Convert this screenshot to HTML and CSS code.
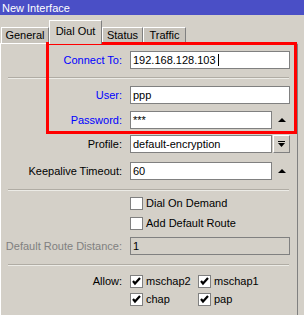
FILE: index.html
```html
<!DOCTYPE html>
<html>
<head>
<meta charset="utf-8">
<link rel="stylesheet" href="styles.css">
</head>
<body>
<div class="title">New Interface</div>
<div class="tabs">
  <div class="tab t-general">General</div>
  <div class="tab active t-dial">Dial Out</div>
  <div class="tab t-status">Status</div>
  <div class="tab t-traffic">Traffic</div>
</div>
<div class="panel">
  <div class="row m7">
    <div class="lbl blue">Connect To:</div>
    <div class="input">192.168.128.103<span class="caret"></span></div>
  </div>
  <div class="sep m8"></div>
  <div class="row m7">
    <div class="lbl blue">User:</div>
    <div class="input">ppp</div>
  </div>
  <div class="row m7">
    <div class="lbl blue">Password:</div>
    <div class="input short">***</div>
    <div class="spin"><span class="up"></span></div>
  </div>
  <div class="row m6">
    <div class="lbl">Profile:</div>
    <div class="input short">default-encryption</div>
    <div class="dropbtn">
      <svg width="9" height="7" viewBox="0 0 9 7"><rect x="1" y="0" width="7" height="1" fill="#000"/><path d="M1 2 H8 L4.5 6 Z" fill="#000"/></svg>
    </div>
  </div>
  <div class="row m9">
    <div class="lbl">Keepalive Timeout:</div>
    <div class="input short">60</div>
    <div class="spin"><span class="up"></span></div>
  </div>
  <div class="sep m9"></div>
  <div class="crow m6">
    <span class="cb"></span><span class="ctext">Dial On Demand</span>
  </div>
  <div class="crow m7">
    <span class="cb"></span><span class="ctext">Add Default Route</span>
  </div>
  <div class="row m7">
    <div class="lbl gray">Default Route Distance:</div>
    <div class="input disabled">1</div>
  </div>
  <div class="sep m9"></div>
  <div class="allow m9">
    <div class="lbl albl">Allow:</div>
    <div class="checks">
      <div class="citem"><span class="cb on"><svg width="11" height="11" viewBox="0 0 11 11"><path d="M2 5 L4 7.5 L9 2" fill="none" stroke="#000" stroke-width="2.2"/></svg></span><span class="ctext">mschap2</span></div>
      <div class="citem"><span class="cb on"><svg width="11" height="11" viewBox="0 0 11 11"><path d="M2 5 L4 7.5 L9 2" fill="none" stroke="#000" stroke-width="2.2"/></svg></span><span class="ctext">mschap1</span></div>
      <div class="citem"><span class="cb on"><svg width="11" height="11" viewBox="0 0 11 11"><path d="M2 5 L4 7.5 L9 2" fill="none" stroke="#000" stroke-width="2.2"/></svg></span><span class="ctext">chap</span></div>
      <div class="citem"><span class="cb on"><svg width="11" height="11" viewBox="0 0 11 11"><path d="M2 5 L4 7.5 L9 2" fill="none" stroke="#000" stroke-width="2.2"/></svg></span><span class="ctext">pap</span></div>
    </div>
  </div>
</div>
<div class="mark"></div>
</body>
</html>
```
FILE: styles.css
```css
* { box-sizing: border-box; }
html, body { margin: 0; padding: 0; }
body {
  width: 304px;
  height: 315px;
  overflow: hidden;
  position: relative;
  background: #d4d0c8;
  font-family: "Liberation Sans", Arial, sans-serif;
  font-size: 11px;
  color: #000;
}
.title {
  height: 15px;
  background: #4a4fc6;
  color: #fff;
  padding: 2px 0 0 2px;
  line-height: 13px;
}
.tabs {
  display: flex;
  align-items: flex-end;
  height: 28px;
  padding-left: 1px;
}
.tab {
  height: 16px;
  line-height: 14px;
  text-align: center;
  background: #c8c4bc;
  border-top: 1px solid #fff;
  border-left: 1px solid #fff;
  border-right: 1px solid #808080;
}
.tab.active {
  position: relative;
  z-index: 2;
  height: 24px;
  margin-bottom: -1px;
  line-height: 20px;
  background: #d4d0c8;
}
.t-general { width: 48px; }
.t-dial { width: 53px; }
.t-status { width: 41px; }
.t-traffic { width: 43px; }
.panel {
  width: 298px;
  height: 272px;
  border-top: 1px solid #fff;
  border-left: 1px solid #fff;
  border-right: 1px solid #808080;
}
.m6 { margin-top: 6px; }
.m7 { margin-top: 7px; }
.m8 { margin-top: 8px; }
.m9 { margin-top: 9px; }
.row {
  display: flex;
  align-items: center;
  height: 18px;
}
.lbl {
  width: 121px;
  margin-right: 8px;
  text-align: right;
  white-space: nowrap;
}
.blue { color: #0000ff; }
.gray { color: #808080; }
.input {
  position: relative;
  width: 160px;
  height: 18px;
  border: 1px solid #808080;
  background: #fff;
  padding-left: 2px;
  line-height: 16px;
  white-space: nowrap;
}
.input.short { width: 142px; }
.input.disabled { background: #d4d0c8; }
.caret {
  display: inline-block;
  width: 1px;
  height: 12px;
  margin-left: 2px;
  vertical-align: -2px;
  background: #000;
}
.spin {
  width: 17px;
  height: 18px;
  margin-left: 1px;
  display: flex;
  align-items: center;
  justify-content: center;
}
.up {
  width: 0;
  height: 0;
  border-left: 4.5px solid transparent;
  border-right: 4.5px solid transparent;
  border-bottom: 4px solid #000;
}
.dropbtn {
  width: 17px;
  height: 18px;
  margin-left: 1px;
  display: flex;
  align-items: center;
  justify-content: center;
  background: #d4d0c8;
  border-top: 1px solid #fff;
  border-left: 1px solid #fff;
  border-right: 1px solid #808080;
  border-bottom: 1px solid #808080;
}
.sep {
  width: 281px;
  margin-left: 7px;
  height: 2px;
  border-top: 1px solid #b0aca4;
  border-bottom: 1px solid #ecebe6;
}
.crow {
  display: flex;
  align-items: center;
  height: 13px;
  padding-left: 129px;
}
.cb {
  display: inline-flex;
  align-items: center;
  justify-content: center;
  width: 13px;
  height: 13px;
  flex: none;
  border: 1px solid #808080;
  background: #fff;
}
.ctext {
  margin-left: 3px;
  line-height: 13px;
  white-space: nowrap;
}
.allow {
  display: flex;
  align-items: flex-start;
}
.albl { line-height: 13px; }
.checks {
  display: grid;
  grid-template-columns: 68px auto;
  row-gap: 5px;
}
.citem {
  display: flex;
  align-items: center;
  height: 13px;
}
.mark {
  position: absolute;
  left: 46px;
  top: 42px;
  width: 251px;
  height: 92px;
  border: 3px solid #ff0000;
}
```
